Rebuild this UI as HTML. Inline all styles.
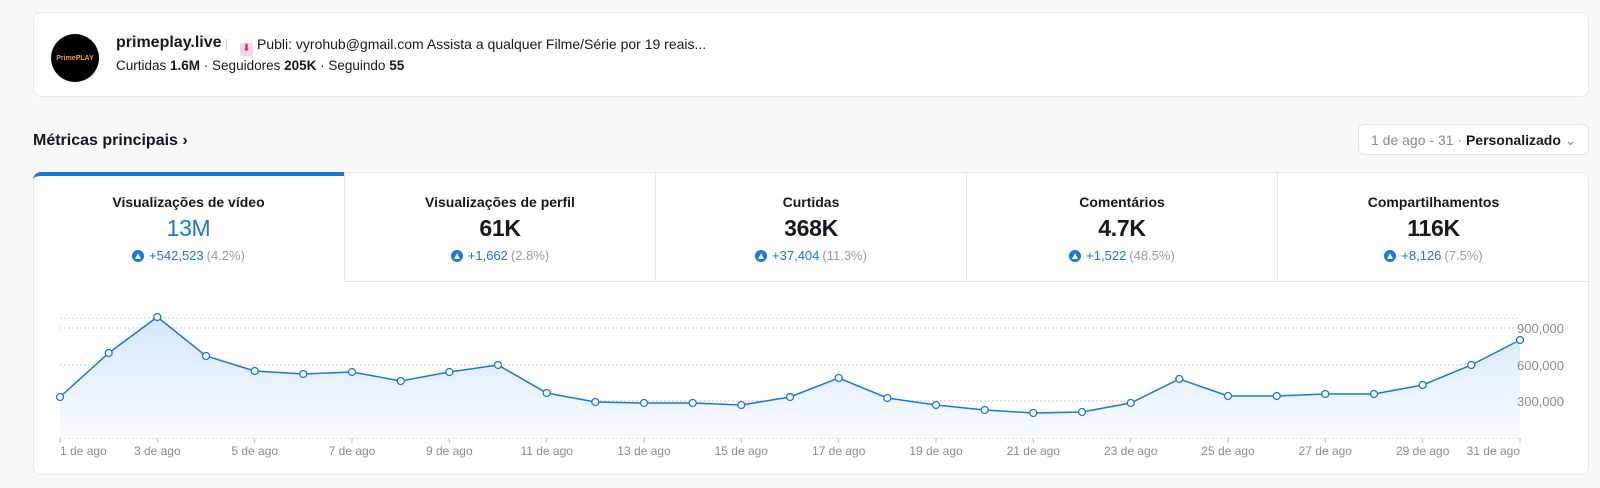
<!DOCTYPE html>
<html><head><meta charset="utf-8"><style>
*{box-sizing:border-box;margin:0;padding:0}
body{width:1600px;height:488px;background:#f8f8f8;font-family:"Liberation Sans",sans-serif;position:relative;overflow:hidden;color:#161823}
.card{position:absolute;background:#fff;border:1px solid #e8e8e8;border-radius:8px}
.av{position:absolute;left:51px;top:34px;width:48px;height:48px;border-radius:50%;background:#000;color:#e8a317;font-size:7px;font-weight:bold;display:flex;align-items:center;justify-content:center}
.name{position:absolute;left:116px;top:34px;font-size:16px;font-weight:bold;white-space:nowrap}
.bio{position:absolute;left:240px;top:36px;font-size:14px;white-space:nowrap}
.stats{position:absolute;left:116px;top:58px;font-size:13.5px;white-space:nowrap}
.stats b{font-weight:bold}
.title{position:absolute;left:33px;top:132px;font-size:16px;font-weight:bold}
.date{position:absolute;left:1358px;top:124px;width:231px;height:31px;background:#fff;border:1px solid #e3e3e3;border-radius:6px;font-size:14px;padding:7px 0 0 12px;white-space:nowrap;color:#8a8b91}
.date b{color:#161823}
.tab{position:absolute;top:172px;height:110px;width:311px;text-align:center;border-left:1px solid #e5e5e5;border-bottom:1px solid #e5e5e5}
.tab .t{margin-top:22px;font-size:14px;font-weight:bold}
.tab .v{margin-top:5px;font-size:23px;font-weight:bold;letter-spacing:-.3px}
.tab .d{margin-top:6px;font-size:13px;color:#1677e5;display:flex;justify-content:center;align-items:center;gap:3px}
.tab .d span{color:#9a9ba0}
.ic{width:12px;height:12px;border-radius:50%;background:#1677e5;display:inline-block;position:relative;margin-right:2px}
.ic:after{content:"";position:absolute;left:3px;top:3px;width:0;height:0;border-left:3px solid transparent;border-right:3px solid transparent;border-bottom:6px solid #fff}
</style></head><body>
<div class="card" style="left:33px;top:12px;width:1556px;height:85px"></div>
<div class="av">Prime<span style="color:#f5a623">PLAY</span></div>
<div class="name">primeplay.live</div>
<div style="position:absolute;left:226px;top:39px;width:1px;height:11px;background:#ccc"></div>
<div class="bio"><span style="display:inline-block;width:13px;height:13px;background:#f0d6ee;border-radius:2px;vertical-align:-2px;margin-right:4px;color:#e0245e;font-size:10px;text-align:center;line-height:11px">⬇</span>Publi: vyrohub@gmail.com Assista a qualquer Filme/Série por 19 reais...</div>
<div class="stats">Curtidas <b>1.6M</b> · Seguidores <b>205K</b> · Seguindo <b>55</b></div>
<div class="title">Métricas principais ›</div>
<div class="date">1 de ago - 31 · <b>Personalizado</b> ⌄</div>
<div class="card" style="left:33px;top:172px;width:1556px;height:303px;overflow:hidden">
</div>
<div class="tab" style="left:33px;border-left:none;border-bottom:none;border-top:4px solid #1677e5;border-radius:8px 0 0 0"><div class="t" style="margin-top:18px">Visualizações de vídeo</div><div class="v" style="color:#1677e5;font-weight:normal">13M</div><div class="d"><i class="ic"></i>+542,523 <span>(4.2%)</span></div></div>
<div class="tab" style="left:344px"><div class="t">Visualizações de perfil</div><div class="v">61K</div><div class="d"><i class="ic"></i>+1,662 <span>(2.8%)</span></div></div>
<div class="tab" style="left:655px"><div class="t">Curtidas</div><div class="v">368K</div><div class="d"><i class="ic"></i>+37,404 <span>(11.3%)</span></div></div>
<div class="tab" style="left:966px"><div class="t">Comentários</div><div class="v">4.7K</div><div class="d"><i class="ic"></i>+1,522 <span>(48.5%)</span></div></div>
<div class="tab" style="left:1277px;width:312px"><div class="t">Compartilhamentos</div><div class="v">116K</div><div class="d"><i class="ic"></i>+8,126 <span>(7.5%)</span></div></div>
<svg style="position:absolute;left:0;top:0" width="1600" height="488">
<defs><linearGradient id="g" x1="0" y1="0" x2="0" y2="1"><stop offset="0" stop-color="#d6e7f9"/><stop offset="1" stop-color="#f7fbff"/></linearGradient></defs>
<g stroke="#c8c8c8" stroke-dasharray="2,2" stroke-width="1">
<line x1="60" y1="318" x2="1520" y2="318"/><line x1="60" y1="328" x2="1520" y2="328"/><line x1="60" y1="365" x2="1520" y2="365"/><line x1="60" y1="401" x2="1520" y2="401"/><line x1="60" y1="438" x2="1520" y2="438"/></g>
<polygon fill="url(#g)" points="60,438 60,397 108.7,353 157.3,317 206,356 254.7,371 303.3,374 352,372 400.7,381 449.3,372 498,365 546.7,393 595.3,402 644,403 692.7,403 741.3,405 790,397 838.7,378 887.3,398 936,405 984.7,410 1033.3,413 1082,412 1130.7,403 1179.3,379 1228,396 1276.7,396 1325.3,394 1374,394 1422.7,385 1471.3,365 1520,340 1520,438"/>
<polyline fill="none" stroke="#1677e5" stroke-width="1.5" points="60,397 108.7,353 157.3,317 206,356 254.7,371 303.3,374 352,372 400.7,381 449.3,372 498,365 546.7,393 595.3,402 644,403 692.7,403 741.3,405 790,397 838.7,378 887.3,398 936,405 984.7,410 1033.3,413 1082,412 1130.7,403 1179.3,379 1228,396 1276.7,396 1325.3,394 1374,394 1422.7,385 1471.3,365 1520,340"/>
<g fill="#fff" stroke="#1677e5" stroke-width="1.3">
<circle cx="60" cy="397" r="3.5"/><circle cx="108.7" cy="353" r="3.5"/><circle cx="157.3" cy="317" r="3.5"/><circle cx="206" cy="356" r="3.5"/><circle cx="254.7" cy="371" r="3.5"/><circle cx="303.3" cy="374" r="3.5"/><circle cx="352" cy="372" r="3.5"/><circle cx="400.7" cy="381" r="3.5"/><circle cx="449.3" cy="372" r="3.5"/><circle cx="498" cy="365" r="3.5"/><circle cx="546.7" cy="393" r="3.5"/><circle cx="595.3" cy="402" r="3.5"/><circle cx="644" cy="403" r="3.5"/><circle cx="692.7" cy="403" r="3.5"/><circle cx="741.3" cy="405" r="3.5"/><circle cx="790" cy="397" r="3.5"/><circle cx="838.7" cy="378" r="3.5"/><circle cx="887.3" cy="398" r="3.5"/><circle cx="936" cy="405" r="3.5"/><circle cx="984.7" cy="410" r="3.5"/><circle cx="1033.3" cy="413" r="3.5"/><circle cx="1082" cy="412" r="3.5"/><circle cx="1130.7" cy="403" r="3.5"/><circle cx="1179.3" cy="379" r="3.5"/><circle cx="1228" cy="396" r="3.5"/><circle cx="1276.7" cy="396" r="3.5"/><circle cx="1325.3" cy="394" r="3.5"/><circle cx="1374" cy="394" r="3.5"/><circle cx="1422.7" cy="385" r="3.5"/><circle cx="1471.3" cy="365" r="3.5"/><circle cx="1520" cy="340" r="3.5"/></g>
<g stroke="#bbb"><line x1="60" y1="438" x2="60" y2="443"/><line x1="157.3" y1="438" x2="157.3" y2="443"/><line x1="254.7" y1="438" x2="254.7" y2="443"/><line x1="352" y1="438" x2="352" y2="443"/><line x1="449.3" y1="438" x2="449.3" y2="443"/><line x1="546.7" y1="438" x2="546.7" y2="443"/><line x1="644" y1="438" x2="644" y2="443"/><line x1="741.3" y1="438" x2="741.3" y2="443"/><line x1="838.7" y1="438" x2="838.7" y2="443"/><line x1="936" y1="438" x2="936" y2="443"/><line x1="1033.3" y1="438" x2="1033.3" y2="443"/><line x1="1130.7" y1="438" x2="1130.7" y2="443"/><line x1="1228" y1="438" x2="1228" y2="443"/><line x1="1325.3" y1="438" x2="1325.3" y2="443"/><line x1="1422.7" y1="438" x2="1422.7" y2="443"/><line x1="1520" y1="438" x2="1520" y2="443"/></g>
<g font-family="Liberation Sans,sans-serif" font-size="12" fill="#8a8b91" text-anchor="middle">
<text x="60" y="455" text-anchor="start">1 de ago</text><text x="157.3" y="455">3 de ago</text><text x="254.7" y="455">5 de ago</text><text x="352" y="455">7 de ago</text><text x="449.3" y="455">9 de ago</text><text x="546.7" y="455">11 de ago</text><text x="644" y="455">13 de ago</text><text x="741.3" y="455">15 de ago</text><text x="838.7" y="455">17 de ago</text><text x="936" y="455">19 de ago</text><text x="1033.3" y="455">21 de ago</text><text x="1130.7" y="455">23 de ago</text><text x="1228" y="455">25 de ago</text><text x="1325.3" y="455">27 de ago</text><text x="1422.7" y="455">29 de ago</text><text x="1520" y="455" text-anchor="end">31 de ago</text>
<g text-anchor="start" font-size="13"><text x="1517" y="333">900,000</text><text x="1517" y="370">600,000</text><text x="1517" y="406">300,000</text></g></g>
</svg>
</body></html>
